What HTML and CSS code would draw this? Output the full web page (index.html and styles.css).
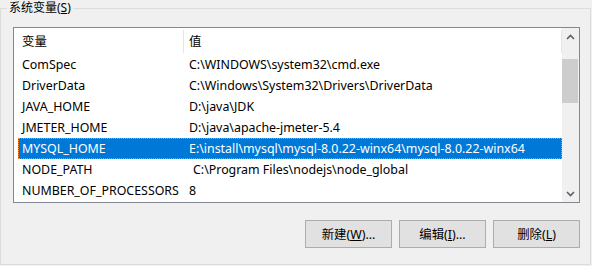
FILE: index.html
```html
<!DOCTYPE html>
<html lang="zh-CN">
<head>
  <meta charset="UTF-8" />
  <title>系统变量</title>
  <link rel="stylesheet" href="styles.css">
</head>
<body>
  <fieldset class="group">
    <legend>系统变量(<u>S</u>)</legend>
    <div class="list">
      <div class="table">
        <div class="head">
          <div class="hcell first">变量</div>
          <div class="hcell">值</div>
        </div>
        <div class="row"><span class="name">ComSpec</span><span>C:\WINDOWS\system32\cmd.exe</span></div>
        <div class="row"><span class="name">DriverData</span><span>C:\Windows\System32\Drivers\DriverData</span></div>
        <div class="row"><span class="name">JAVA_HOME</span><span>D:\java\JDK</span></div>
        <div class="row"><span class="name">JMETER_HOME</span><span>D:\java\apache-jmeter-5.4</span></div>
        <div class="row selected"><span class="name">MYSQL_HOME</span><span>E:\install\mysql\mysql-8.0.22-winx64\mysql-8.0.22-winx64</span></div>
        <div class="row"><span class="name">NODE_PATH</span><span class="pad">C:\Program Files\nodejs\node_global</span></div>
        <div class="row"><span class="name">NUMBER_OF_PROCESSORS</span><span>8</span></div>
      </div>
      <div class="scrollbar">
        <div class="arrow">
          <svg width="9" height="6" viewBox="0 0 9 6"><path d="M1 5 L4.5 1.5 L8 5" fill="none" stroke="#606060" stroke-width="1.6"/></svg>
        </div>
        <div class="track">
          <div class="thumb"></div>
        </div>
        <div class="arrow">
          <svg width="9" height="6" viewBox="0 0 9 6"><path d="M1 1 L4.5 4.5 L8 1" fill="none" stroke="#606060" stroke-width="1.6"/></svg>
        </div>
      </div>
    </div>
    <div class="buttons">
      <button class="btn">新建(<u>W</u>)...</button>
      <button class="btn">编辑(<u>I</u>)...</button>
      <button class="btn">删除(<u>L</u>)</button>
    </div>
  </fieldset>
</body>
</html>
```

FILE: styles.css
```css
* {
  box-sizing: border-box;
}
html, body {
  margin: 0;
  height: 100%;
  overflow: hidden;
}
body {
  background: #f0f0f0;
  color: #000;
  font-family: "Noto Sans", "Noto Sans CJK SC", sans-serif;
  font-size: 12.4px;
}
.group {
  margin: 0;
  width: 591px;
  height: 265px;
  border: 1px solid #dcdcdc;
  padding: 11px 0 0 12px;
}
.group legend {
  margin-left: -6px;
  padding: 0 2px;
  line-height: 16px;
  font-size: 12px;
}
.list {
  display: flex;
  width: 567px;
  height: 176px;
  border: 1px solid #828790;
  background: #fff;
}
.table {
  flex: 1;
  overflow: hidden;
}
.head {
  display: flex;
  height: 26px;
  align-items: center;
  padding-top: 1px;
}
.hcell {
  height: 23px;
  line-height: 23px;
  padding-left: 5px;
  flex: 1;
  border-right: 1px solid #e5e5e5;
}
.hcell.first {
  flex: 0 0 170px;
  padding-left: 8px;
}
.row {
  display: grid;
  grid-template-columns: 171px 1fr;
  height: 21px;
  line-height: 21px;
  margin-left: 4px;
  white-space: nowrap;
}
.row .name {
  padding-left: 4px;
}
.row .pad {
  padding-left: 4px;
}
.row.selected {
  background: #0078d7;
  color: #fff;
  outline: 1px dotted #ff8728;
  outline-offset: -1px;
}
.scrollbar {
  width: 17px;
  display: flex;
  flex-direction: column;
  background: #f0f0f0;
}
.arrow {
  height: 17px;
  display: flex;
  align-items: center;
  justify-content: center;
}
.track {
  flex: 1;
  padding-top: 14px;
}
.thumb {
  height: 44px;
  margin: 0 1px 0 0;
  background: #cdcdcd;
}
.buttons {
  display: flex;
  justify-content: flex-end;
  gap: 7px;
  width: 567px;
  margin-top: 17px;
}
.btn {
  width: 87px;
  height: 28px;
  background: #e1e1e1;
  border: 1px solid #adadad;
  font: inherit;
  color: #000;
  padding: 0;
}
```
